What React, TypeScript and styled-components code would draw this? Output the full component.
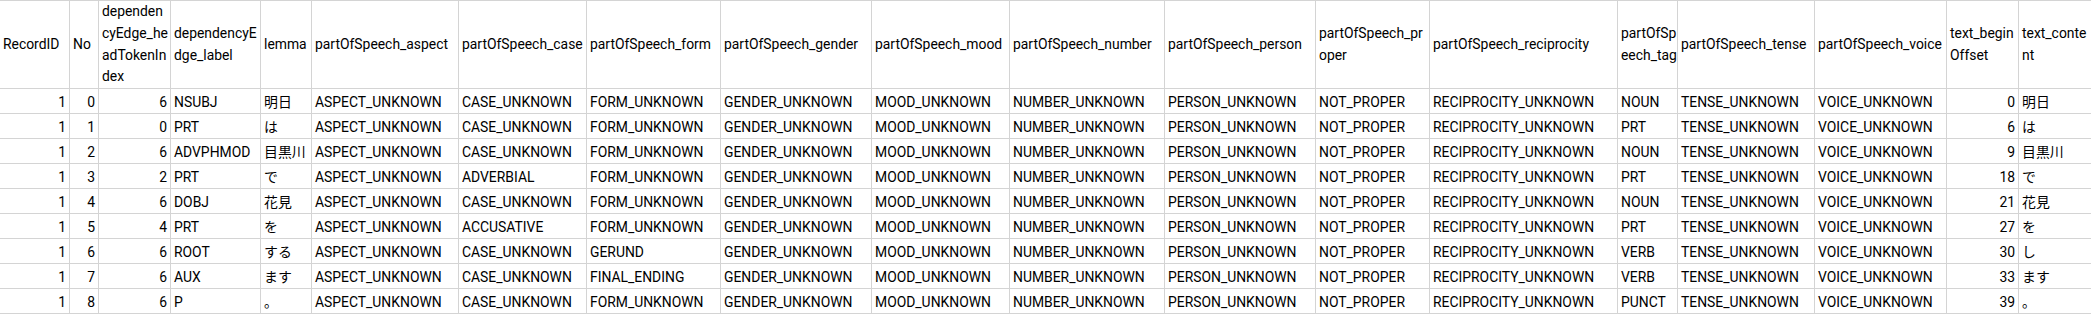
import React from "react";
import styled, { createGlobalStyle } from "styled-components";

const GlobalStyle = createGlobalStyle`
  html, body {
    margin: 0;
    padding: 0;
    background: #ffffff;
    overflow: hidden;
  }
  body {
    font-family: "Roboto", "Noto Sans CJK JP", sans-serif;
    color: #000000;
  }
`;

type Column = {
  key: string;
  header: string[];
  width: number;
  numeric?: boolean;
};

const columns: Column[] = [
  { key: "RecordID", header: ["RecordID"], width: 70, numeric: true },
  { key: "No", header: ["No"], width: 29, numeric: true },
  { key: "head", header: ["dependen", "cyEdge_he", "adTokenIn", "dex"], width: 72, numeric: true },
  { key: "label", header: ["dependencyE", "dge_label"], width: 90 },
  { key: "lemma", header: ["lemma"], width: 51 },
  { key: "aspect", header: ["partOfSpeech_aspect"], width: 147 },
  { key: "case", header: ["partOfSpeech_case"], width: 128 },
  { key: "form", header: ["partOfSpeech_form"], width: 134 },
  { key: "gender", header: ["partOfSpeech_gender"], width: 151 },
  { key: "mood", header: ["partOfSpeech_mood"], width: 138 },
  { key: "number", header: ["partOfSpeech_number"], width: 155 },
  { key: "person", header: ["partOfSpeech_person"], width: 151 },
  { key: "proper", header: ["partOfSpeech_pr", "oper"], width: 114 },
  { key: "reciprocity", header: ["partOfSpeech_reciprocity"], width: 188 },
  { key: "tag", header: ["partOfSp", "eech_tag"], width: 60 },
  { key: "tense", header: ["partOfSpeech_tense"], width: 137 },
  { key: "voice", header: ["partOfSpeech_voice"], width: 132 },
  { key: "offset", header: ["text_begin", "Offset"], width: 72, numeric: true },
  { key: "content", header: ["text_conte", "nt"], width: 73 },
];

type Token = {
  no: number;
  head: number;
  label: string;
  lemma: string;
  caseV: string;
  form: string;
  tag: string;
  offset: number;
  content: string;
};

const tokens: Token[] = [
  { no: 0, head: 6, label: "NSUBJ", lemma: "明日", caseV: "CASE_UNKNOWN", form: "FORM_UNKNOWN", tag: "NOUN", offset: 0, content: "明日" },
  { no: 1, head: 0, label: "PRT", lemma: "は", caseV: "CASE_UNKNOWN", form: "FORM_UNKNOWN", tag: "PRT", offset: 6, content: "は" },
  { no: 2, head: 6, label: "ADVPHMOD", lemma: "目黒川", caseV: "CASE_UNKNOWN", form: "FORM_UNKNOWN", tag: "NOUN", offset: 9, content: "目黒川" },
  { no: 3, head: 2, label: "PRT", lemma: "で", caseV: "ADVERBIAL", form: "FORM_UNKNOWN", tag: "PRT", offset: 18, content: "で" },
  { no: 4, head: 6, label: "DOBJ", lemma: "花見", caseV: "CASE_UNKNOWN", form: "FORM_UNKNOWN", tag: "NOUN", offset: 21, content: "花見" },
  { no: 5, head: 4, label: "PRT", lemma: "を", caseV: "ACCUSATIVE", form: "FORM_UNKNOWN", tag: "PRT", offset: 27, content: "を" },
  { no: 6, head: 6, label: "ROOT", lemma: "する", caseV: "CASE_UNKNOWN", form: "GERUND", tag: "VERB", offset: 30, content: "し" },
  { no: 7, head: 6, label: "AUX", lemma: "ます", caseV: "CASE_UNKNOWN", form: "FINAL_ENDING", tag: "VERB", offset: 33, content: "ます" },
  { no: 8, head: 6, label: "P", lemma: "。", caseV: "CASE_UNKNOWN", form: "FORM_UNKNOWN", tag: "PUNCT", offset: 39, content: "。" },
];

const rowValues = (t: Token): (string | number)[] => [
  1,
  t.no,
  t.head,
  t.label,
  t.lemma,
  "ASPECT_UNKNOWN",
  t.caseV,
  t.form,
  "GENDER_UNKNOWN",
  "MOOD_UNKNOWN",
  "NUMBER_UNKNOWN",
  "PERSON_UNKNOWN",
  "NOT_PROPER",
  "RECIPROCITY_UNKNOWN",
  t.tag,
  "TENSE_UNKNOWN",
  "VOICE_UNKNOWN",
  t.offset,
  t.content,
];

const GRID = "#d4d4d4";

const Sheet = styled.div<{ $template: string }>`
  display: grid;
  grid-template-columns: ${(p) => p.$template};
  grid-template-rows: 88px repeat(9, 25px);
  border-top: 1px solid ${GRID};
  width: max-content;
  font-size: 13.9px;
`;

const HeaderCell = styled.div`
  box-sizing: border-box;
  display: flex;
  align-items: center;
  padding: 0 3px;
  border-right: 1px solid ${GRID};
  border-bottom: 1px solid ${GRID};
  overflow: hidden;
`;

const HeaderText = styled.div`
  line-height: 21.7px;
  white-space: nowrap;
`;

const HeaderLine = styled.div`
  display: block;
`;

const Cell = styled.div<{ $numeric?: boolean }>`
  box-sizing: border-box;
  display: flex;
  align-items: center;
  justify-content: ${(p) => (p.$numeric ? "flex-end" : "flex-start")};
  padding: 1px 3px 0;
  border-right: 1px solid ${GRID};
  border-bottom: 1px solid ${GRID};
  white-space: nowrap;
  overflow: hidden;
  line-height: 24px;
`;

export default function App() {
  const template = columns.map((c) => `${c.width}px`).join(" ");
  return (
    <>
      <GlobalStyle />
      <Sheet $template={template}>
        {columns.map((c) => (
          <HeaderCell key={c.key}>
            <HeaderText>
              {c.header.map((line, i) => (
                <HeaderLine key={i}>{line}</HeaderLine>
              ))}
            </HeaderText>
          </HeaderCell>
        ))}
        {tokens.map((t) =>
          rowValues(t).map((v, i) => (
            <Cell key={`${t.no}-${i}`} $numeric={columns[i].numeric}>
              {v}
            </Cell>
          ))
        )}
      </Sheet>
    </>
  );
}
